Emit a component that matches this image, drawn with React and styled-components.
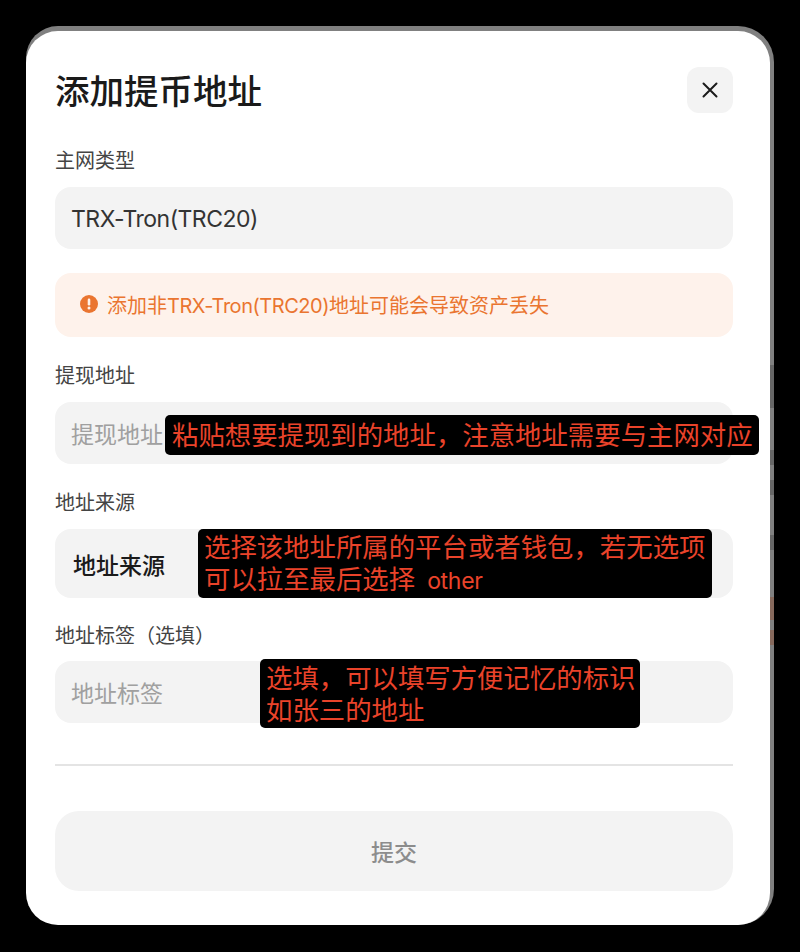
import React from "react";
import styled, { createGlobalStyle } from "styled-components";

const fontStack = `"Inter", "Noto Sans CJK SC", sans-serif`;

const GlobalStyle = createGlobalStyle`
  html, body {
    margin: 0;
    padding: 0;
    background: #000;
  }
  body {
    font-family: ${fontStack};
  }
`;

const Page = styled.div`
  width: 800px;
  height: 952px;
  padding: 26px 26px 24px;
  box-sizing: border-box;
  background: #000;
  overflow: hidden;
`;

const Backdrop = styled.div`
  position: relative;
  width: 748px;
  padding: 5px 4px 0 0;
  box-sizing: border-box;
  border-radius: 32px 36px 36px 44px;
  background: #808080;
`;

// the page behind the sheet peeks out here as a few dark marks
const PeekStrip = styled.div`
  position: absolute;
  right: 0;
  top: 335px;
  width: 4px;
  height: 300px;
  background: linear-gradient(
    to bottom,
    transparent 0 4px,
    #666 4px 47px,
    transparent 47px 89px,
    #666 89px 104px,
    transparent 104px 119px,
    #666 119px 134px,
    transparent 134px 174px,
    #666 174px 189px,
    transparent 189px 236px,
    #86695c 236px 259px,
    transparent 259px 269px,
    #86695c 269px 284px,
    transparent 284px
  );
`;

const Sheet = styled.div`
  position: relative;
  display: flex;
  flex-direction: column;
  height: 894px;
  padding: 36px 37px 34px 29px;
  box-sizing: border-box;
  border-radius: 32px;
  background: #fff;
`;

const Header = styled.div`
  display: flex;
  align-items: center;
  justify-content: space-between;
  height: 46px;
  margin-bottom: 34px;
`;

const Title = styled.h1`
  margin: 0;
  padding-top: 3px;
  font-size: 34.5px;
  line-height: 46px;
  font-weight: 500;
  color: #1a1a1a;
`;

const CloseButton = styled.button`
  display: flex;
  align-items: center;
  justify-content: center;
  width: 46px;
  height: 46px;
  padding: 0;
  border: 0;
  border-radius: 12px;
  background: #f3f3f3;
  color: #1a1a1a;
`;

const Field = styled.div`
  position: relative;
  display: flex;
  flex-direction: column;
  gap: ${(p) => p.$gap || 12}px;
  margin-top: ${(p) => p.$top || 0}px;
`;

const Label = styled.div`
  font-size: 20px;
  line-height: 28px;
  color: #444;
`;

const InputBox = styled.div`
  display: flex;
  align-items: center;
  height: ${(p) => p.$height || 62}px;
  padding-left: ${(p) => p.$left || 16}px;
  border-radius: 16px;
  background: #f3f3f3;
  font-size: 23px;
  font-weight: ${(p) => (p.$strong ? 500 : 400)};
  color: ${(p) => p.$color || "#333"};
`;

const InputValue = styled.span`
  padding-top: 2px;
  letter-spacing: -0.5px;
`;

const Warning = styled.div`
  display: flex;
  align-items: center;
  gap: 9px;
  height: 64px;
  margin-top: 24px;
  padding: 0 0 3px 25px;
  box-sizing: border-box;
  border-radius: 16px;
  background: #fef2eb;
  font-size: 20px;
  color: #ea7530;
`;

const WarningText = styled.span`
  padding-top: 1px;
`;

const Latin = styled.span`
  letter-spacing: -0.47px;
`;

const Divider = styled.hr`
  width: 100%;
  height: 2px;
  margin: 41px 0 45px;
  border: 0;
  background: #e4e4e4;
`;

const Submit = styled.button`
  height: 80px;
  border: 0;
  border-radius: 24px;
  background: #f3f3f3;
  font-family: ${fontStack};
  font-size: 23px;
  font-weight: 500;
  color: #8c8c8c;
`;

const Note = styled.div`
  position: absolute;
  left: ${(p) => p.$left}px;
  top: ${(p) => p.$top}px;
  width: ${(p) => p.$width}px;
  height: ${(p) => p.$height}px;
  padding-left: ${(p) => p.$pad || 6}px;
  box-sizing: border-box;
  display: flex;
  flex-direction: column;
  justify-content: center;
  border-radius: 5px;
  background: #000;
  color: #ea432a;
  font-size: 26.4px;
  line-height: 32px;
  white-space: nowrap;
`;

const NoteLine = styled.div`
  display: flex;
  align-items: baseline;
`;

const NoteLatin = styled.span`
  margin-left: 12px;
  font-size: 23px;
  letter-spacing: -0.3px;
`;

const AlertIcon = () => (
  <svg width="18" height="18" viewBox="0 0 18 18">
    <circle cx="9" cy="9" r="9" fill="#ea7530" />
    <rect x="7.7" y="3.6" width="2.6" height="7" rx="1.3" fill="#fef2eb" />
    <circle cx="9" cy="13" r="1.5" fill="#fef2eb" />
  </svg>
);

const CloseIcon = () => (
  <svg width="16" height="16" viewBox="0 0 16 16">
    <path
      d="M1.5 1.5 L14.5 14.5 M14.5 1.5 L1.5 14.5"
      stroke="currentColor"
      strokeWidth="2"
      strokeLinecap="round"
    />
  </svg>
);

const App = () => {
  return (
    <Page>
      <GlobalStyle />
      <Backdrop>
        <PeekStrip />
        <Sheet>
          <Header>
            <Title>添加提币地址</Title>
            <CloseButton>
              <CloseIcon />
            </CloseButton>
          </Header>

          <Field>
            <Label>主网类型</Label>
            <InputBox>
              <InputValue>TRX-Tron(TRC20)</InputValue>
            </InputBox>
          </Field>

          <Warning>
            <AlertIcon />
            <WarningText>
              添加非<Latin>TRX-Tron(TRC20)</Latin>地址可能会导致资产丢失
            </WarningText>
          </Warning>

          <Field $top={25}>
            <Label>提现地址</Label>
            <InputBox $color="#a0a0a0">提现地址</InputBox>
            <Note $left={110} $top={53} $width={594} $height={40} $pad={7}>
              <NoteLine>粘贴想要提现到的地址，注意地址需要与主网对应</NoteLine>
            </Note>
          </Field>

          <Field $top={25}>
            <Label>地址来源</Label>
            <InputBox $height={69} $left={18} $strong $color="#1a1a1a">
              地址来源
            </InputBox>
            <Note $left={143} $top={40} $width={514} $height={69}>
              <NoteLine>选择该地址所属的平台或者钱包，若无选项</NoteLine>
              <NoteLine>
                可以拉至最后选择
                <NoteLatin>other</NoteLatin>
              </NoteLine>
            </Note>
          </Field>

          <Field $top={24} $gap={11}>
            <Label>地址标签（选填）</Label>
            <InputBox $color="#a0a0a0">地址标签</InputBox>
            <Note $left={205} $top={37} $width={380} $height={69}>
              <NoteLine>选填，可以填写方便记忆的标识</NoteLine>
              <NoteLine>如张三的地址</NoteLine>
            </Note>
          </Field>

          <Divider />

          <Submit>提交</Submit>
        </Sheet>
      </Backdrop>
    </Page>
  );
};

export default App;
